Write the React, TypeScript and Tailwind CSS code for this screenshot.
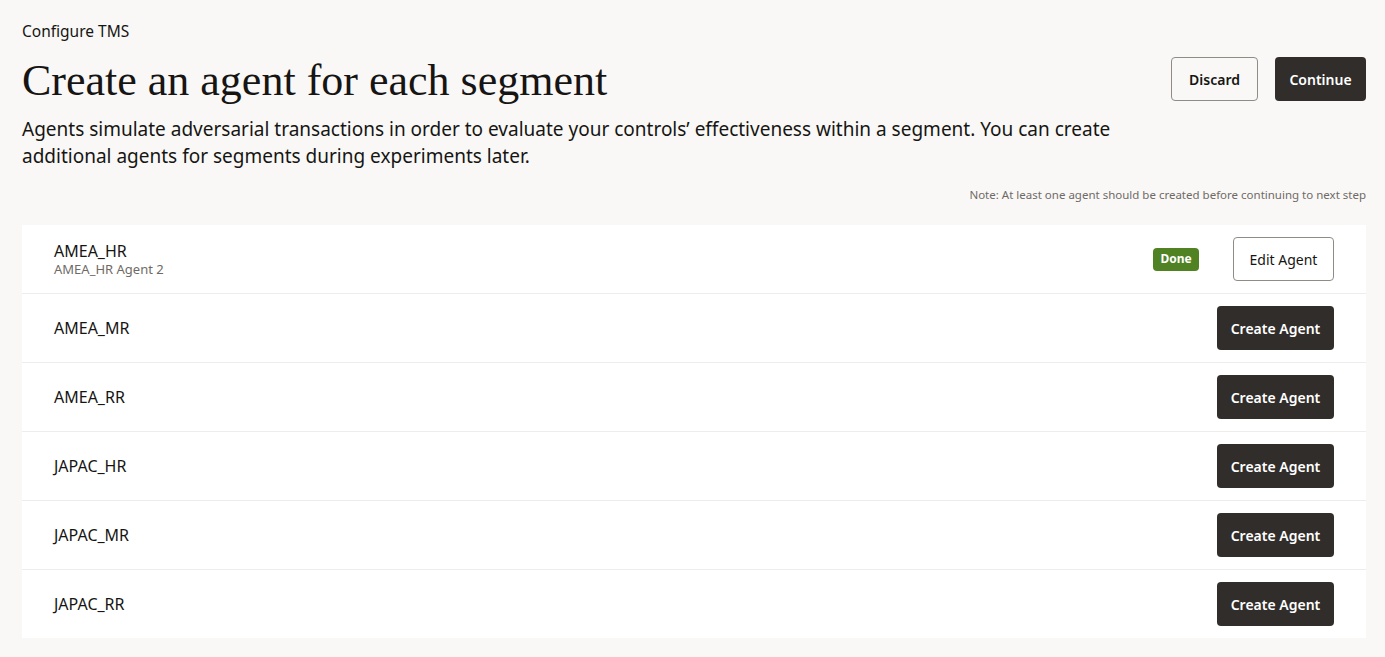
import React from "react";

const rows = [
  { name: "AMEA_HR", sub: "AMEA_HR Agent 2", done: true },
  { name: "AMEA_MR" },
  { name: "AMEA_RR" },
  { name: "JAPAC_HR" },
  { name: "JAPAC_MR" },
  { name: "JAPAC_RR" },
];

export default function App() {
  return (
    <div
      className="min-h-[657px] bg-[#f9f8f6] pl-[22px] pr-[19px] pt-[20px] pb-[19px] text-[#161513]"
      style={{ fontFamily: '"Noto Sans", "Open Sans", sans-serif' }}
    >
      <div className="text-[15.5px] leading-[22px]">Configure TMS</div>
      <div className="mt-[15px] flex items-start justify-between">
        <h1
          className="text-[44px] leading-[48px]"
          style={{ fontFamily: '"Liberation Serif", Georgia, serif' }}
        >
          Create an agent for each segment
        </h1>
        <div className="flex gap-[17px]">
          <button className="h-[44px] w-[87px] rounded-[4px] border border-[#8f8c88] bg-transparent text-[14px] font-semibold text-[#161513]">
            Discard
          </button>
          <button className="h-[44px] w-[91px] rounded-[4px] bg-[#312d2a] text-[14px] font-semibold text-white">
            Continue
          </button>
        </div>
      </div>
      <p className="mt-[11px] max-w-[1110px] text-[19px] leading-[27px]">
        Agents simulate adversarial transactions in order to evaluate your controls’ effectiveness within a segment. You can create additional agents for segments during experiments later.
      </p>
      <div className="mt-[17px] text-right text-[11.5px] leading-[16px] text-[#6f6a66]">
        Note: At least one agent should be created before continuing to next step
      </div>
      <div className="mt-[22px] bg-white">
        {rows.map((r, i) => (
          <div
            key={r.name}
            className={`flex items-center justify-between pl-[32px] pr-[32px] ${i > 0 ? "h-[69px] border-t border-[#efedeb]" : "h-[68px]"}`}
          >
            <div>
              <div className="text-[16px] leading-[20px]">{r.name}</div>
              {r.sub && (
                <div className="text-[13px] leading-[16px] text-[#6f6a66]">{r.sub}</div>
              )}
            </div>
            {r.done ? (
              <div className="flex items-center gap-[34px]">
                <span className="flex h-[23px] w-[46px] items-center justify-center rounded-[4px] bg-[#508223] text-[12px] font-bold text-white">
                  Done
                </span>
                <button className="h-[44px] w-[101px] rounded-[4px] border border-[#8f8c88] bg-white text-[14px] text-[#161513]">
                  Edit Agent
                </button>
              </div>
            ) : (
              <button className="h-[44px] w-[117px] rounded-[4px] bg-[#312d2a] text-[14px] font-semibold text-white">
                Create Agent
              </button>
            )}
          </div>
        ))}
      </div>
    </div>
  );
}
